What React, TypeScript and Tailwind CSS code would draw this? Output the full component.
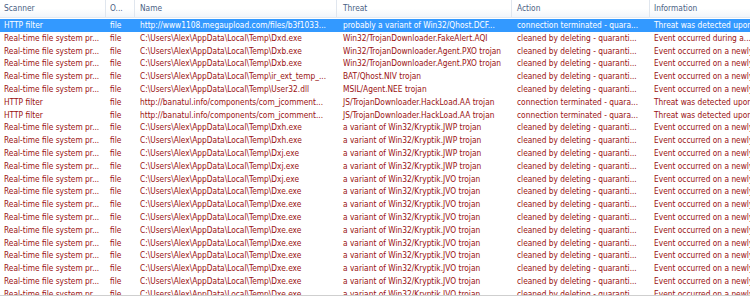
const cols = [
  { title: 'Scanner', cls: 'w-[106px] pl-[4px]' },
  { title: 'O...', cls: 'w-[29px] pl-[4px]' },
  { title: 'Name', cls: 'w-[202px] pl-[5px]' },
  { title: 'Threat', cls: 'w-[175px] pl-[6px]' },
  { title: 'Action', cls: 'w-[138px] pl-[5px]' },
  { title: 'Information', cls: 'w-[140px] pl-[4px]' },
];

const temp = 'C:\\Users\\Alex\\AppData\\Local\\Temp\\';
const rt = 'Real-time file system pr...';
const cleaned = 'cleaned by deleting - quaranti...';
const onNew = 'Event occurred on a newly created file...';
const jwp = 'a variant of Win32/Kryptik.JWP trojan';
const jvo = 'a variant of Win32/Kryptik.JVO trojan';

const httpRow = (name: string, threat: string) => [
  'HTTP filter',
  'file',
  name,
  threat,
  'connection terminated - quara...',
  'Threat was detected upon access to web...',
];
const fileRow = (file: string, threat: string, info = onNew) => [rt, 'file', temp + file, threat, cleaned, info];

const rows: string[][] = [
  httpRow('http://www1108.megaupload.com/files/b3f1033...', 'probably a variant of Win32/Qhost.DCF...'),
  fileRow('Dxd.exe', 'Win32/TrojanDownloader.FakeAlert.AQI', 'Event occurred during a...'),
  fileRow('Dxb.exe', 'Win32/TrojanDownloader.Agent.PXO trojan'),
  fileRow('Dxb.exe', 'Win32/TrojanDownloader.Agent.PXO trojan'),
  fileRow('ir_ext_temp_...', 'BAT/Qhost.NIV trojan'),
  fileRow('User32.dll', 'MSIL/Agent.NEE trojan'),
  httpRow('http://banatul.info/components/com_jcomment...', 'JS/TrojanDownloader.HackLoad.AA trojan'),
  httpRow('http://banatul.info/components/com_jcomment...', 'JS/TrojanDownloader.HackLoad.AA trojan'),
  fileRow('Dxh.exe', jwp),
  fileRow('Dxh.exe', jwp),
  fileRow('Dxj.exe', jwp),
  fileRow('Dxj.exe', jwp),
  fileRow('Dxj.exe', jvo),
  fileRow('Dxe.exe', jvo),
  fileRow('Dxe.exe', jvo),
  fileRow('Dxe.exe', jvo),
  fileRow('Dxe.exe', jvo),
  fileRow('Dxe.exe', jvo),
  fileRow('Dxe.exe', jvo),
  fileRow('Dxe.exe', jvo),
  fileRow('Dxe.exe', jvo),
  fileRow('Dxe.exe', jvo),
];

export default function App() {
  return (
    <div className="w-[750px] h-[297px] overflow-hidden bg-white font-['DejaVu_Sans_Condensed','DejaVu_Sans',sans-serif] text-[8.3px]">
      <div className="h-[295px] overflow-hidden">
        {/* column header */}
        <div className="flex h-[18px] bg-gradient-to-b from-white via-white to-[#f1f5fa] border-b border-[#e3e9f1] text-[#4a6184]">
          {cols.map((c) => (
            <div
              key={c.title}
              className={`${c.cls} shrink-0 flex items-center border-r border-[#e0e6ee] whitespace-nowrap overflow-hidden`}
            >
              {c.title}
            </div>
          ))}
        </div>
        <div className="pt-[1px]">
          {rows.map((r, i) => (
            <div
              key={i}
              className={
                i === 0
                  ? 'flex h-[12.8px] items-center bg-[#3399ff] text-white'
                  : 'flex h-[12.8px] items-center text-[#9a1010]'
              }
            >
              {r.map((cell, j) => (
                <div key={j} className={`${cols[j].cls} shrink-0 whitespace-nowrap overflow-hidden leading-[12.8px]`}>
                  {cell}
                </div>
              ))}
            </div>
          ))}
        </div>
      </div>
      <div className="h-[1px] bg-[#cfcfcf]" />
    </div>
  );
}
